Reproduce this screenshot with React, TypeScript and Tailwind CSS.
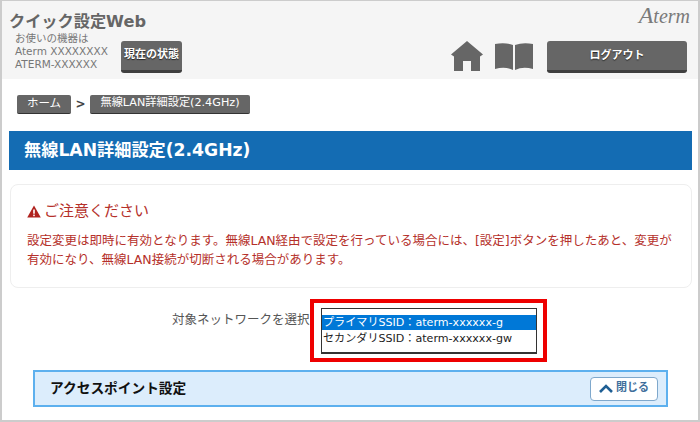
import React from "react";

const font = { fontFamily: '"DejaVu Sans", "Noto Sans CJK JP", sans-serif' };

function DarkButton({ w, h, children, cls }: { w: string; h: string; children: React.ReactNode; cls: string }) {
  return (
    <div className={`${w} ${h} ${cls} flex items-center justify-center rounded-[3px] bg-[#666666] border-b-[3px] border-b-[#3f3f3f] text-white font-bold [text-shadow:0_1px_1px_#222222]`}>
      {children}
    </div>
  );
}

export default function App() {
  return (
    <div className="w-[700px] h-[422px] overflow-hidden bg-white border border-[#cccccc] border-l-2 border-r-2 border-b-2 text-[#666666] flex flex-col" style={font}>
      <header className="h-[78px] shrink-0 bg-[#f5f5f5] flex justify-between pl-[7px] pr-[6px]">
        <div className="flex flex-col">
          <div className="text-[16.2px] leading-[20px] font-bold text-[#666666] mt-[11px] whitespace-nowrap">クイック設定Web</div>
          <div className="flex pl-[6px]">
            <div className="text-[10.5px] leading-[13px] text-[#777777] w-[106px] whitespace-nowrap">
              <div>お使いの機器は</div>
              <div>Aterm XXXXXXXX</div>
              <div>ATERM-XXXXXX</div>
            </div>
            <DarkButton w="w-[61px]" h="h-[32px]" cls="text-[11px] mt-[9px]">現在の状態</DarkButton>
          </div>
        </div>
        <div className="flex flex-col items-end">
          <div className="italic text-[20px] leading-[20px] text-[#7a7a7a] mt-[4px] mr-[2px]" style={{ fontFamily: '"Liberation Serif", serif' }}>
            <span className="text-[24px]">A</span>term
          </div>
          <div className="flex items-start mt-[15px] mr-[5px]">
            <svg width="32" height="31" viewBox="0 0 32 31" className="mr-[12px]">
              <path d="M16 0 L32 13.5 L29 15.5 L29 30 L20 30 L20 20 L12 20 L12 30 L3 30 L3 15.5 L0 13.5 Z" fill="#666666" />
            </svg>
            <svg width="38" height="28" viewBox="0 0 38 28" className="mr-[14px] mt-[2px]">
              <path d="M0 1 Q10 -1 18 2 L18 27 Q10 23 0 26 Z M20 2 Q28 -1 38 1 L38 26 Q28 23 20 27 Z" fill="#666666" />
            </svg>
            <DarkButton w="w-[140px]" h="h-[32px]" cls="text-[11px] pt-[2px]">ログアウト</DarkButton>
          </div>
        </div>
      </header>

      <nav className="flex items-center h-[20px] mt-[15px] ml-[15px] text-[11.2px]">
        <div className="w-[54px] h-[19px] flex items-center justify-center bg-[#666666] text-white rounded-[2px] border-b border-b-[#333333] text-[11.5px]">ホーム</div>
        <span className="w-[19px] text-center text-[#444444] text-[12px] font-bold">&gt;</span>
        <div className="w-[160px] h-[19px] flex items-center justify-center bg-[#666666] text-white rounded-[2px] border-b border-b-[#333333] whitespace-nowrap">無線LAN詳細設定(2.4GHz)</div>
      </nav>

      <div className="h-[39px] mt-[17px] ml-[7px] mr-[6px] shrink-0 bg-[#146cb3] flex items-center pl-[15px] text-white text-[17.2px] font-bold">
        無線LAN詳細設定(2.4GHz)
      </div>

      <section className="h-[104px] mt-[14px] ml-[8px] mr-[6px] shrink-0 rounded-[8px] border border-[#eeeeee] px-[16px] text-[#b5302a]">
        <div className="flex items-center mt-[15px] h-[22px] text-[15px]">
          <svg width="14" height="13" viewBox="0 0 14 13" className="mr-[3px]">
            <path d="M7 0.5 L13.8 12.5 L0.2 12.5 Z" fill="#b0231f" />
            <rect x="6.2" y="4.5" width="1.6" height="4.2" fill="#fff" />
            <rect x="6.2" y="9.6" width="1.6" height="1.6" fill="#fff" />
          </svg>
          ご注意ください
        </div>
        <p className="mt-[9px] text-[12.5px] leading-[19px] whitespace-nowrap">
          設定変更は即時に有効となります。無線LAN経由で設定を行っている場合には、[設定]ボタンを押したあと、変更が<br />
          有効になり、無線LAN接続が切断される場合があります。
        </p>
      </section>

      <div className="flex items-start mt-[11px] shrink-0">
        <div className="ml-[170px] w-[138px] mt-[12px] text-[12.5px] leading-[18px] whitespace-nowrap text-[#555555]">対象ネットワークを選択</div>
        <div className="w-[237px] h-[63px] border-[4px] border-[#ee0000] pt-[5px] pl-[7px]">
          <div className="w-[216px] h-[46px] border border-[#333333] border-b-2 pt-[6px] text-[11.1px] text-[#222222] bg-white whitespace-nowrap">
            <div className="h-[15px] leading-[15px] bg-[#0078d7] text-white pl-[1px]">プライマリSSID：aterm-xxxxxx-g</div>
            <div className="h-[17px] leading-[17px] pl-[1px]">セカンダリSSID：aterm-xxxxxx-gw</div>
          </div>
        </div>
      </div>

      <div className="h-[37px] mt-[8px] ml-[31px] w-[635px] shrink-0 bg-[#dcedfc] border-[2px] border-[#5db0ee] flex items-center justify-between pl-[15px] pr-[8px]">
        <span className="text-[13.7px] font-bold text-[#111111]">アクセスポイント設定</span>
        <div className="w-[68px] h-[24px] bg-white rounded-[4px] border border-[#7fa8cc] flex items-center justify-center text-[11px] font-bold text-[#3f6f9c]">
          <svg width="14" height="9" viewBox="0 0 14 9" className="mr-[3px]">
            <path d="M1 8 L7 2 L13 8" fill="none" stroke="#1f5f94" strokeWidth="2.6" />
          </svg>
          閉じる
        </div>
      </div>
    </div>
  );
}
